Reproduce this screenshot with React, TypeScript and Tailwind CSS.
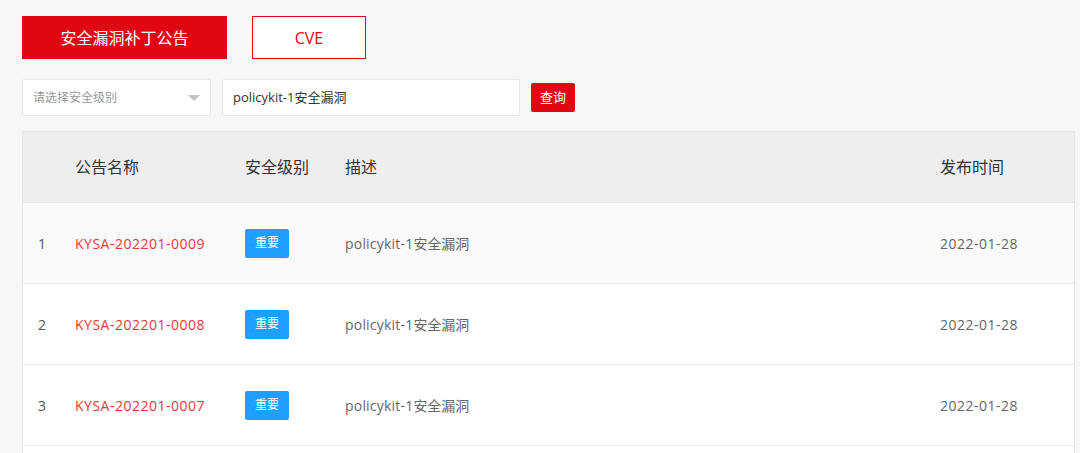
import React from "react";

const font = { fontFamily: '"Open Sans", "Noto Sans CJK SC", sans-serif' };

const rows = [
  { n: 1, id: "KYSA-202201-0009", bg: "bg-[#fafafa]" },
  { n: 2, id: "KYSA-202201-0008", bg: "bg-white" },
  { n: 3, id: "KYSA-202201-0007", bg: "bg-white" },
];

export default function App() {
  return (
    <div className="w-[1080px] h-[453px] overflow-hidden bg-[#f7f7f7] pl-[22px] pt-[16px]" style={font}>
      <div className="flex gap-[25px]">
        <div className="w-[205px] h-[43px] bg-[#e20613] text-white text-[16px] flex items-center justify-center">安全漏洞补丁公告</div>
        <div className="w-[114px] h-[43px] bg-white border border-[#e20613] text-[#e20613] text-[16px] flex items-center justify-center">CVE</div>
      </div>
      <div className="flex items-center mt-[20px] h-[37px]">
        <div className="w-[189px] h-[37px] bg-white border border-[#e8e8e8] rounded-[2px] flex items-center justify-between pl-[10px] pr-[10px] text-[12px] text-[#999]">
          <span>请选择安全级别</span>
          <span className="w-0 h-0 border-l-[6px] border-r-[6px] border-t-[6px] border-l-transparent border-r-transparent border-t-[#c2c2c2]" />
        </div>
        <div className="ml-[11px] w-[298px] h-[37px] bg-white border border-[#e8e8e8] rounded-[2px] flex items-center pl-[10px] text-[13px] text-[#333]">policykit-1安全漏洞</div>
        <div className="ml-[11px] w-[44px] h-[29px] bg-[#e20613] rounded-[2px] text-white text-[13px] flex items-center justify-center">查询</div>
      </div>
      <div className="mt-[15px] w-[1053px] border border-[#e6e6e6]">
        <div className="flex items-center h-[71px] bg-[#eeeef0] text-[16px] text-[#333] border-b border-[#e6e6e6]">
          <div className="w-[52px]" />
          <div className="w-[170px]">公告名称</div>
          <div className="w-[100px]">安全级别</div>
          <div className="w-[595px]">描述</div>
          <div>发布时间</div>
        </div>
        {rows.map((r) => (
          <div key={r.n} className={`flex items-center h-[81px] ${r.bg} border-b border-[#ececec] text-[14px]`}>
            <div className="w-[52px] pl-[15px] text-[#555]">{r.n}</div>
            <div className="w-[170px] text-[#e4393c] tracking-[0.5px]">{r.id}</div>
            <div className="w-[100px]">
              <span className="inline-flex items-center justify-center w-[44px] h-[29px] bg-[#1e9fff] rounded-[2px] text-white text-[12px]">重要</span>
            </div>
            <div className="w-[595px] text-[#666]">
              <span className="tracking-[0.2px]">policykit-1</span>安全漏洞
            </div>
            <div className="text-[#666] tracking-[0.5px]">2022-01-28</div>
          </div>
        ))}
        <div className="h-[40px] bg-white" />
      </div>
    </div>
  );
}
